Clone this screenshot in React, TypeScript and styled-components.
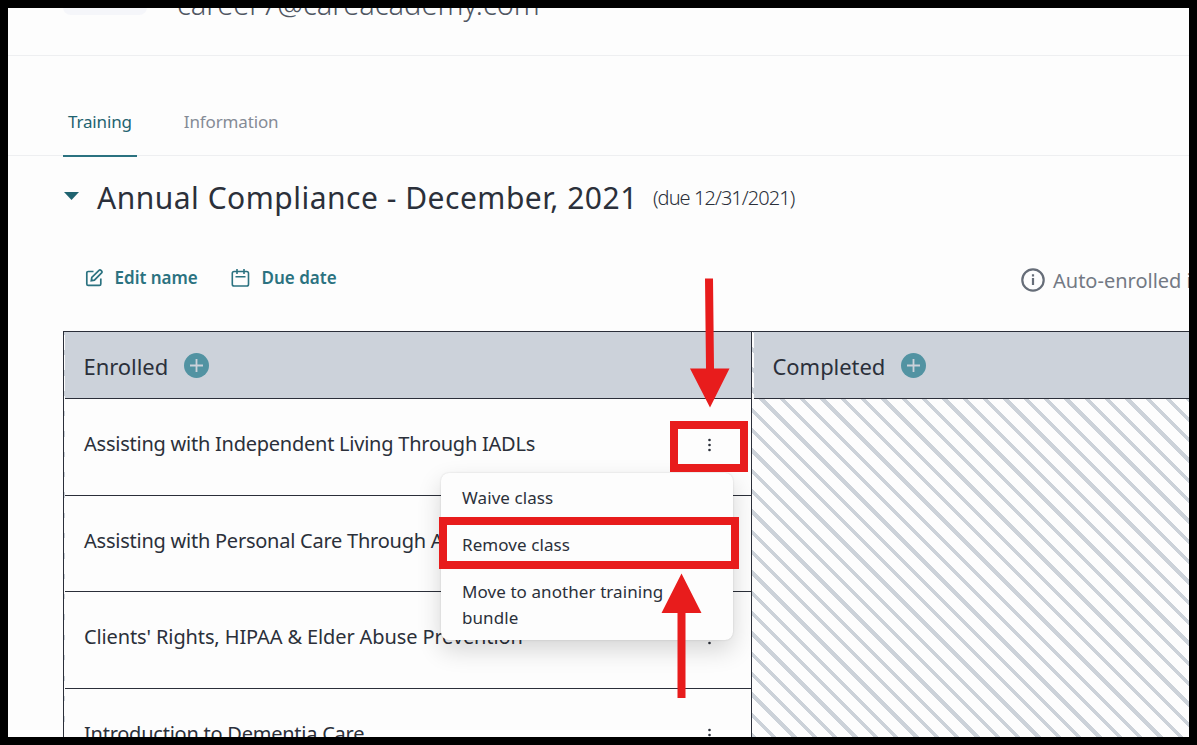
import React from 'react';
import styled, { createGlobalStyle } from 'styled-components';

const classes = [
  { name: 'Assisting with Independent Living Through IADLs', spacing: -0.24 },
  { name: 'Assisting with Personal Care Through ADLs', spacing: -0.24 },
  { name: "Clients' Rights, HIPAA & Elder Abuse Prevention", spacing: -0.12 },
  { name: 'Introduction to Dementia Care', spacing: -0.24 },
];

const Plus = () => (
  <PlusButton>
    <svg width="13" height="13" viewBox="0 0 13 13">
      <path d="M6.5 0v13M0 6.5h13" stroke="#ccd2da" strokeWidth="1.8" />
    </svg>
  </PlusButton>
);

const App = () => {
  return (
    <>
      <GlobalStyle />
      <Frame>
        <ProfileHeader>
          <Avatar />
          <Email>career7@careacademy.com</Email>
        </ProfileHeader>
        <Tabs>
          <Tab $active>Training</Tab>
          <Tab>Information</Tab>
        </Tabs>
        <TitleRow>
          <Caret width="15" height="8" viewBox="0 0 15 8">
            <path d="M0 0h15L7.5 8z" fill="#1f6370" />
          </Caret>
          <Title>Annual Compliance - December, 2021</Title>
          <Due>(due 12/31/2021)</Due>
        </TitleRow>
        <Actions>
          <Action $width={146}>
            <svg width="18" height="18" viewBox="0 0 18 18" fill="none" stroke="#2b7280" strokeWidth="1.7">
              <path d="M8.5 2.5H3.2c-.9 0-1.4.5-1.4 1.4v11c0 .9.5 1.4 1.4 1.4h11.2c.9 0 1.4-.5 1.4-1.4V9.5" />
              <path d="M6.3 11.7l.5-3.2L14 1.3c1.300-1.200 3.900 1.200 2.600 2.600l-7.200 7.200z" />
            </svg>
            <ActionLabel>Edit name</ActionLabel>
          </Action>
          <Action>
            <svg width="19" height="18" viewBox="0 0 19 18" fill="none" stroke="#2b7280" strokeWidth="1.6">
              <rect x="1.3" y="2.5" width="16.2" height="14.5" rx="1.8" />
              <path d="M6 0v5M13 0v5M4.5 7.7h10" />
            </svg>
            <ActionLabel>Due date</ActionLabel>
          </Action>
          <AutoEnrolled>
            <InfoIcon width="24" height="24" viewBox="0 0 24 24">
              <circle cx="12" cy="12" r="10.7" fill="none" stroke="#666d78" strokeWidth="2.2" />
              <path d="M12 10v7M12 6.3v2.2" stroke="#666d78" strokeWidth="2.2" />
            </InfoIcon>
            Auto-enrolled in
          </AutoEnrolled>
        </Actions>
        <Board>
          <Column>
            <ColumnHeader>
              <ColumnTitle>Enrolled</ColumnTitle>
              <Plus />
            </ColumnHeader>
            {classes.map(item => (
              <ClassRow key={item.name}>
                <ClassName $spacing={item.spacing}>{item.name}</ClassName>
                <Dots width="4" height="14" viewBox="0 0 4 14" fill="#2b303a">
                  <circle cx="2.5" cy="2" r="1.3" />
                  <circle cx="2.5" cy="7" r="1.3" />
                  <circle cx="2.5" cy="12" r="1.3" />
                </Dots>
              </ClassRow>
            ))}
          </Column>
          <Column $empty>
            <ColumnHeader>
              <ColumnTitle>Completed</ColumnTitle>
              <Plus />
            </ColumnHeader>
          </Column>
        </Board>
      </Frame>
      <Menu>
        <MenuItem>Waive class</MenuItem>
        <MenuItem>Remove class</MenuItem>
        <MenuItem>
          Move to another training
          <br />
          bundle
        </MenuItem>
      </Menu>
      <DotsHighlight />
      <RemoveHighlight />
      <DownArrow width="41" height="131" viewBox="0 0 41 131">
        <path d="M15 0.5h8l1 90h15.500L20 129.500 0 90.500h16z" fill="#e81c1c" />
      </DownArrow>
      <UpArrow width="41" height="126" viewBox="0 0 41 126">
        <path d="M20.500 0.500L40.500 40H24.500v85h-8V40H0.500z" fill="#e81c1c" />
      </UpArrow>
    </>
  );
};

export default App;

const GlobalStyle = createGlobalStyle`
  * {
    box-sizing: border-box;
  }

  body {
    margin: 0;
    overflow: hidden;
    font-family: 'Noto Sans', 'Open Sans', sans-serif;
    color: #2b303a;
  }
`;

const Frame = styled.div`
  width: 1197px;
  height: 745px;
  border: 8px solid #000;
  background: #fdfdfd;
  overflow: hidden;
`;

const ProfileHeader = styled.div`
  display: flex;
  align-items: flex-end;
  height: 48px;
  padding: 0 0 40px 55px;
  border-bottom: 1px solid #eeeff1;
`;

const Avatar = styled.div`
  width: 84px;
  height: 84px;
  flex-shrink: 0;
  border-radius: 8px;
  background: #f5f6fa;
`;

const Email = styled.div`
  margin: 0 0 -7px 30px;
  font-size: 29px;
  font-weight: 300;
  line-height: 36px;
  color: #4f5662;
`;

const Tabs = styled.div`
  display: flex;
  gap: 42px;
  height: 100px;
  padding: 45px 0 0 55px;
  border-bottom: 1px solid #eeeff1;
`;

const Tab = styled.div<{ $active?: boolean }>`
  height: 56px;
  padding: 9px 5px 0;
  border-bottom: 2px solid ${props => (props.$active ? '#2b7280' : 'transparent')};
  font-size: 17px;
  line-height: 24px;
  letter-spacing: -0.15px;
  white-space: nowrap;
  color: ${props => (props.$active ? '#1f6370' : '#858b96')};
`;

const TitleRow = styled.div`
  display: flex;
  height: 84px;
  padding: 20px 0 0 56px;
`;

const Caret = styled.svg`
  flex-shrink: 0;
  margin: 16px 18px 0 0;
`;

const Title = styled.h1`
  margin: 0;
  width: 556px;
  font-size: 30px;
  font-weight: 400;
  line-height: 44px;
  letter-spacing: 0.5px;
  white-space: nowrap;
`;

const Due = styled.div`
  font-size: 20px;
  font-weight: 300;
  line-height: 44px;
  letter-spacing: -0.95px;
`;

const Actions = styled.div`
  display: flex;
  height: 91px;
  padding: 17px 0 0 77px;
  white-space: nowrap;
`;

const Action = styled.div<{ $width?: number }>`
  display: flex;
  align-items: center;
  gap: 12px;
  width: ${props => (props.$width ? `${props.$width}px` : 'auto')};
  height: 42px;
  font-size: 17px;
  font-weight: 600;
  color: #2b7280;
`;

const ActionLabel = styled.span`
  margin: 0 0 2px -0.5px;
`;

const AutoEnrolled = styled.div`
  display: flex;
  align-items: center;
  gap: 8px;
  width: 168px;
  height: 46px;
  margin-left: auto;
  font-size: 20px;
  color: #737984;
`;

const InfoIcon = styled.svg`
  flex-shrink: 0;
`;

const Board = styled.div`
  display: flex;
  margin-left: 55px;
  height: 420px;
  border-top: 1px solid #2b2f39;
  border-left: 1px solid #2b2f39;
  background: repeating-linear-gradient(
    45deg,
    #fdfdfd 0 6.83px,
    #ccd2d9 6.83px 10.6px,
    #fdfdfd 10.6px 14.38px
  );
`;

const Column = styled.div<{ $empty?: boolean }>`
  flex-shrink: 0;
  width: ${props => (props.$empty ? '440px' : '688px')};
  padding-left: ${props => (props.$empty ? 2 : 1)}px;
  border-right: 1px solid #2b2f39;
`;

const ColumnHeader = styled.div`
  display: flex;
  align-items: center;
  gap: 16px;
  height: 67px;
  padding-left: 18.5px;
  border-bottom: 1px solid #2b2f39;
  background: #ccd2da;
`;

const ColumnTitle = styled.h2`
  margin: 1px 0 0;
  font-size: 22px;
  font-weight: 400;
  line-height: 30px;
  letter-spacing: -0.05px;
`;

const PlusButton = styled.div`
  display: flex;
  align-items: center;
  justify-content: center;
  width: 25px;
  height: 25px;
  border-radius: 50%;
  background: #5293a2;
`;

const ClassRow = styled.div`
  display: flex;
  justify-content: space-between;
  height: 96.6px;
  padding: 30px 40px 0 19px;
  border-bottom: 1px solid #2b2f39;
  background: #fdfdfd;
`;

const ClassName = styled.div<{ $spacing: number }>`
  font-size: 20px;
  line-height: 30px;
  letter-spacing: ${props => props.$spacing}px;
  white-space: nowrap;
`;

const Dots = styled.svg`
  margin-top: 9px;
`;

const Menu = styled.div`
  position: absolute;
  left: 441px;
  top: 473px;
  width: 292px;
  height: 167px;
  padding: 2px 21px;
  border-radius: 8px;
  background: #fdfdfd;
  box-shadow: 0 0 2px rgba(0, 0, 0, 0.15), 0 10px 24px rgba(0, 0, 0, 0.16);
`;

const MenuItem = styled.div`
  padding: 10px 0 11px;
  font-size: 17px;
  line-height: 26px;
  letter-spacing: 0.08px;
`;

const Highlight = styled.div`
  position: absolute;
  border: 8px solid #e81c1c;
`;

const DotsHighlight = styled(Highlight)`
  left: 670px;
  top: 421px;
  width: 78px;
  height: 51px;
`;

const RemoveHighlight = styled(Highlight)`
  left: 439px;
  top: 517px;
  width: 300px;
  height: 52px;
`;

const DownArrow = styled.svg`
  position: absolute;
  left: 690px;
  top: 278px;
`;

const UpArrow = styled.svg`
  position: absolute;
  left: 661px;
  top: 573px;
`;
